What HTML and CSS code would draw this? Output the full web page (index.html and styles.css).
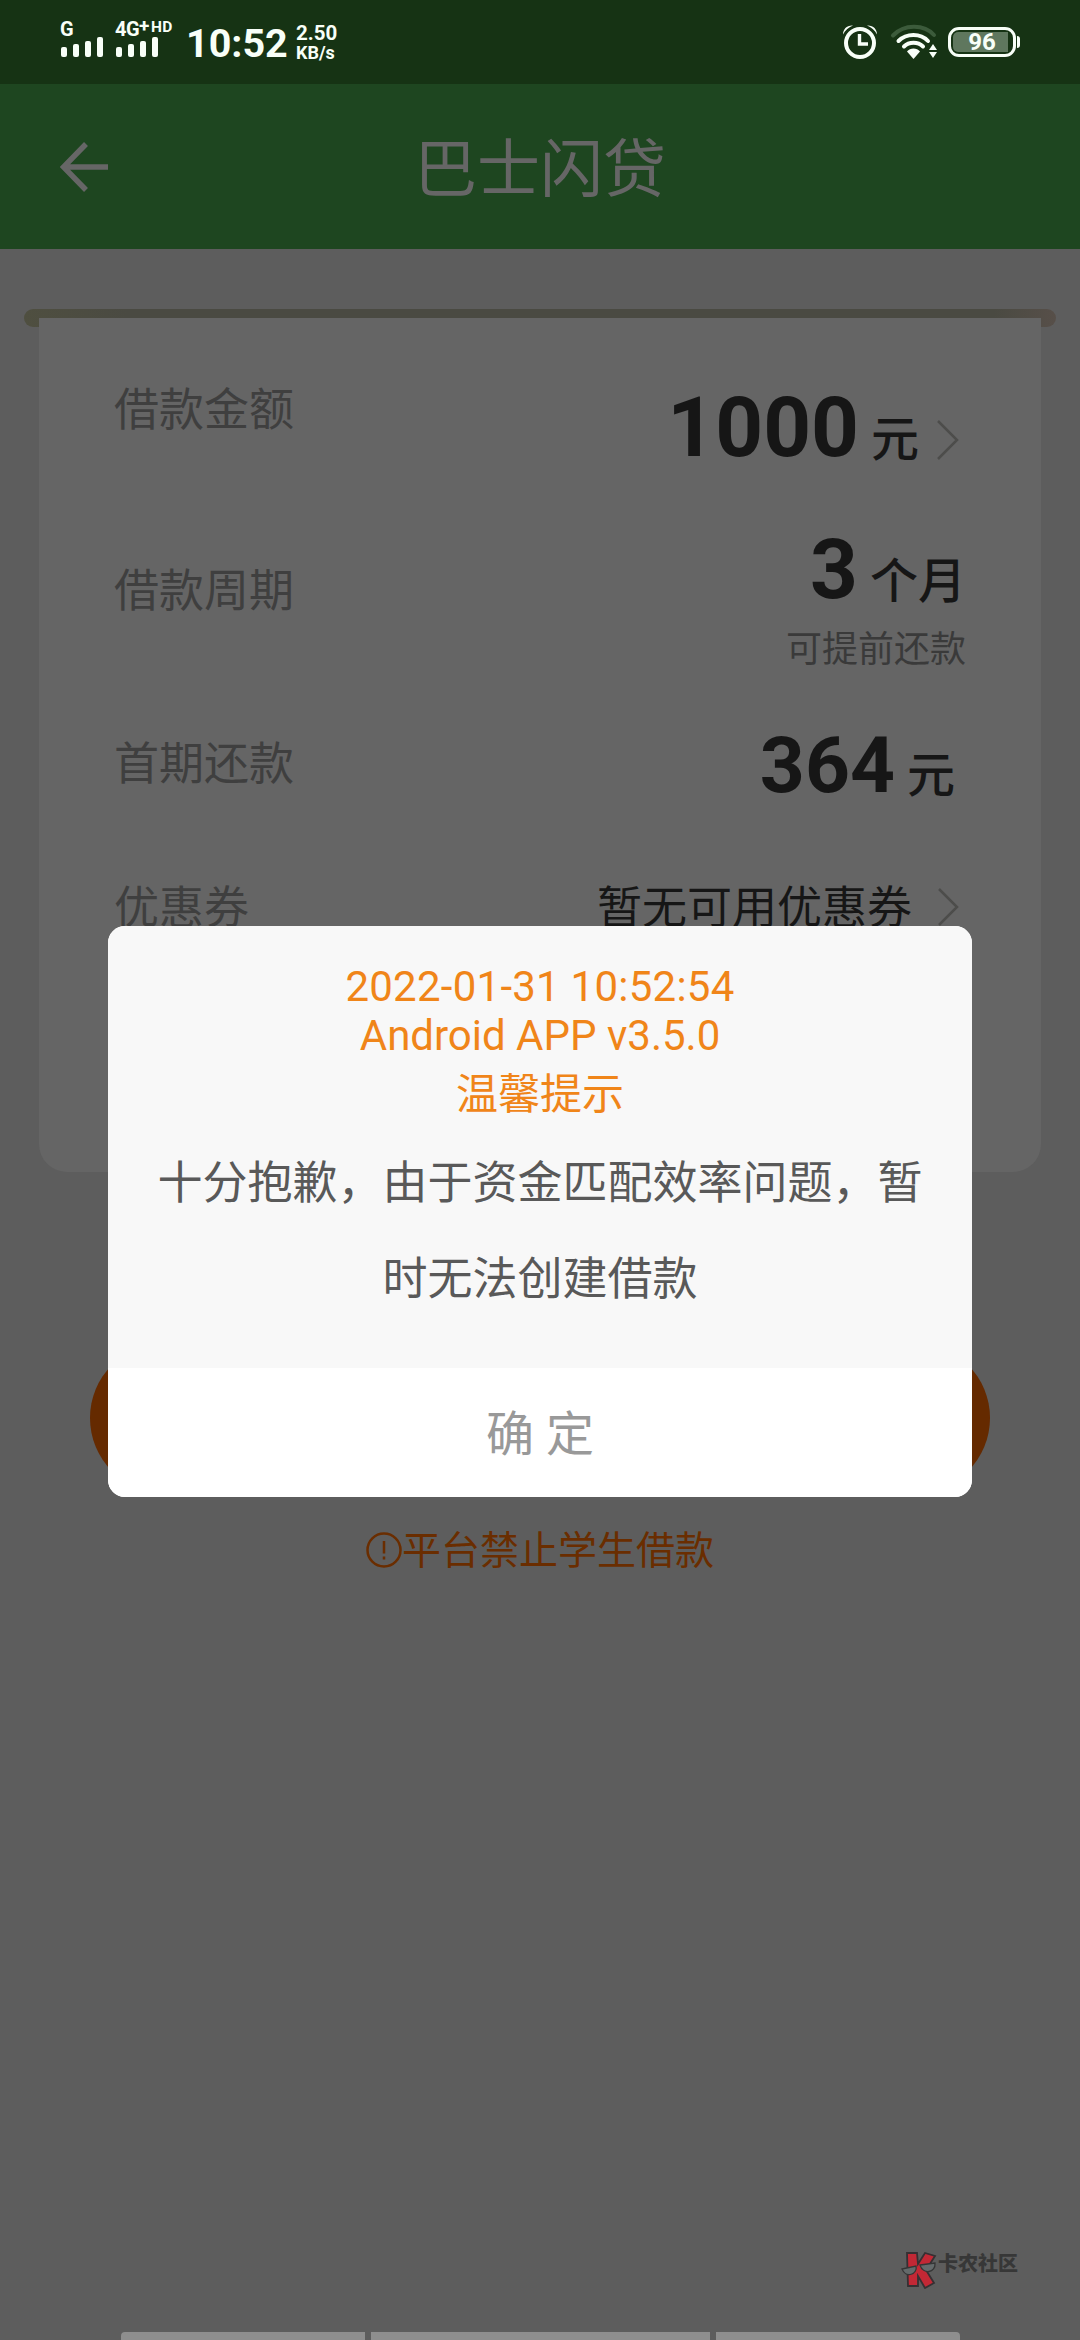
FILE: index.html
```html
<!DOCTYPE html>
<html lang="zh-CN">
<head>
<meta charset="utf-8">
<title>巴士闪贷</title>
<link rel="stylesheet" href="styles.css">
</head>
<body>
<div class="screen">
  <header class="status">
    <div class="sim">
      <span class="net">G</span>
      <svg class="bars" width="42" height="20" viewBox="0 0 42 20"><rect x="0" y="10" width="6" height="10" rx="2"/><rect x="12" y="7" width="6" height="13" rx="2"/><rect x="24" y="4" width="6" height="16" rx="2"/><rect x="36" y="0" width="6" height="20" rx="2"/></svg>
    </div>
    <div class="sim sim-second">
      <span class="net">4G<sup class="plus">+</sup><sup class="hd">HD</sup></span>
      <svg class="bars" width="42" height="20" viewBox="0 0 42 20"><rect x="0" y="10" width="6" height="10" rx="2"/><rect x="12" y="7" width="6" height="13" rx="2"/><rect x="24" y="4" width="6" height="16" rx="2"/><rect x="36" y="0" width="6" height="20" rx="2"/></svg>
    </div>
    <time class="clock">10:52</time>
    <div class="speed"><span>2.50</span><span class="unit">KB/s</span></div>
    <div class="indicators">
      <svg width="36" height="36" viewBox="0 0 36 36" fill="none" stroke="#f8fff8" stroke-width="4"><circle cx="18" cy="19" r="14"/><path d="M17.500 10v10h8.500" stroke-width="3.400"/><path d="M1 10.500C1 5 5 1 11 1.500 7 3 3 6.500 1 10.500zM35 10.500C35 5 31 1 25 1.500c4 1.500 8 5 10 9z" fill="#f8fff8" stroke="none"/></svg>
      <svg class="wifi" width="48" height="36" viewBox="0 0 48 36" fill="none" stroke="#f8fff8" stroke-width="4" stroke-linecap="round"><path d="M3 11.500C14 0 34 0 44 11" stroke="#3c5b3b"/><path d="M8.500 17c8-8 22-8 29.500 0M14 22.500c5-5 14-5 19 0"/><path d="M17 27.500c3-4 10-4 13 0l-6.500 7.500z" fill="#f8fff8" stroke="none"/><path d="M43 20l4 6h-8zM43 34l4-6h-8z" fill="#f8fff8" stroke="none"/></svg>
      <div class="battery"><div class="level">96</div></div><i class="cap"></i>
    </div>
  </header>

  <nav class="appbar">
    <svg width="48" height="50" viewBox="0 0 48 50" fill="none" stroke="#666" stroke-width="5.500"><path d="M26 2L3.500 25 26 48M4 25h44"/></svg>
    <h1 class="title">巴士闪贷</h1>
  </nav>

  <main class="page">
    <div class="slot">
      <section class="card">
        <div class="row amount"><span class="label">借款金额</span><div class="value"><b class="num">1000</b><span class="yuan">元</span><svg class="chev" width="24" height="42" viewBox="0 0 24 42"><path d="M2 2l19 19L2 40"/></svg></div></div>
        <div class="row period"><span class="label">借款周期</span><div class="stack"><div class="value"><b class="num">3</b><span class="yuan">个月</span></div><span class="hint">可提前还款</span></div></div>
        <div class="row first"><span class="label">首期还款</span><div class="value"><b class="num small">364</b><span class="yuan">元</span></div></div>
        <div class="row coupon"><span class="label">优惠券</span><div class="pick"><span>暂无可用优惠券</span><svg class="chev" width="24" height="42" viewBox="0 0 24 42"><path d="M3 3l18 18L3 39"/></svg></div></div>
      </section>
    </div>
    <div class="submit"></div>
    <p class="notice"><svg width="36" height="38" viewBox="0 0 36 38" fill="none" stroke="#6a2d00" stroke-width="2.500"><circle cx="18" cy="18" r="16.500"/><path d="M18 9v12.500M18 24.500v3"/></svg><span>平台禁止学生借款</span></p>
  </main>

  <footer class="bottom">
    <div class="mark">
      <svg width="36" height="38" viewBox="0 0 36 38"><path d="M6 2h10l1 11 7-11 10 3-9 14 8 13-9 5-7-12v10H7z" fill="#c22835" stroke="#363033" stroke-width="1.800"/><path d="M1 18l14-3c2 8-10 13-14 3zM19 14l15-2c1 10-12 12-15 2z" fill="#646a6b" stroke="#353535" stroke-width="1.300"/></svg>
      <span class="mark-text">卡农社区</span>
    </div>
    <div class="tabs"><i></i><i class="mid"></i><i></i></div>
  </footer>

  <div class="dialog" role="dialog">
    <div class="content">
      <h2 class="heading"><span class="date">2022-01-31 10:52:54</span><br>Android APP v3.5.0<br><span class="tip">温馨提示</span></h2>
      <p class="message">十分抱歉，由于资金匹配效率问题，暂时无法创建借款</p>
    </div>
    <button class="confirm">确 定</button>
  </div>
</div>
</body>
</html>
```
FILE: styles.css
```css
* { box-sizing: border-box; }
body { margin: 0; font-family: Roboto, "Noto Sans CJK SC", sans-serif; }
h1, h2, p { margin: 0; font-weight: 400; }
svg { display: block; flex: none; }

.screen { position: relative; width: 1080px; height: 2340px; display: flex; flex-direction: column; background: #5d5d5d; overflow: hidden; }

.status { height: 84px; display: flex; align-items: flex-start; padding: 0 60px; background: #163314; color: #f8fff8; font-weight: 700; }
.sim { width: 56px; padding-top: 20px; padding-left: 1px; }
.sim-second { width: 70px; padding-left: 0; }
.net { display: flex; height: 17px; font-size: 20px; line-height: 19px; letter-spacing: -0.500px; white-space: nowrap; margin-left: -1px; }
.plus { font-size: 19px; line-height: 12px; }
.hd { font-size: 15.500px; line-height: 14px; letter-spacing: 0.300px; margin-left: 2px; }
.bars { fill: #f8fff8; }
.clock { font-size: 39.500px; line-height: 46px; padding-top: 21px; width: 110px; }
.speed { display: flex; flex-direction: column; padding-top: 22px; font-size: 20.500px; line-height: 22px; }
.speed .unit { font-size: 18px; line-height: 17px; }
.indicators { margin-left: auto; display: flex; align-items: center; padding-top: 24px; }
.wifi { margin-left: 12px; }
.battery { width: 68px; height: 30px; margin-left: 10px; padding: 2px 5px 2px 2px; border: 3px solid #f8fff8; border-radius: 11px; }
.level { height: 20px; background: #5f775e; border-radius: 5px 0 0 5px; font-size: 24px; line-height: 21px; text-align: center; padding-left: 3px; }
.cap { width: 3px; height: 12px; margin-left: 1px; border-radius: 0 3px 3px 0; background: #f8fff8; }

.appbar { height: 165px; display: flex; align-items: center; padding: 0 60px; background: #1e4620; color: #666; }
.title { flex: 1; margin-right: 48px; padding-top: 7px; text-align: center; font-size: 63px; line-height: 80px; }

.page { flex: 1; padding-top: 60px; display: flex; flex-direction: column; align-items: center; }
.slot { flex: none; width: 1032px; height: 18px; padding: 9px 15px 0; border-radius: 9px; background: linear-gradient(90deg, #4f4f40, #4a4a42 10%, #4a4a42 94%, #574f49); }
.card { width: 1002px; height: 854px; padding: 0 75px 0 75px; background: #656565; border-radius: 0 0 28px 28px; }
.row { display: flex; justify-content: space-between; }
.label { font-size: 45px; line-height: 60px; color: #3f3f3f; }
.value { display: flex; align-items: baseline; justify-content: flex-end; color: #161616; line-height: 96px; }
.num { font-size: 83.500px; }
.num.small { font-size: 78.500px; }
.yuan { font-size: 48px; font-weight: 500; margin-left: 12px; }
.chev { fill: none; stroke: #4d4d4b; stroke-width: 2.500; }
.amount { height: 142px; padding-top: 62px; }
.amount .label { height: 60px; padding-top: 1px; }
.amount .value { margin-right: 6px; }
.amount .chev { margin-left: 17px; align-self: flex-start; margin-top: 39px; }
.period { height: 275px; padding-top: 62px; }
.period .label { padding-top: 40px; }
.period .stack { display: flex; flex-direction: column; align-items: flex-end; }
.hint { font-size: 36px; line-height: 44px; margin-top: -2px; color: #3a3a3a; }
.first { height: 144px; }
.first .value { height: 96px; margin: -18px 11px 0 0; }
.coupon { padding-right: 6px; }
.pick { display: flex; font-size: 45px; line-height: 60px; color: #161616; }
.pick .chev { margin: 7px 0 0 24px; }

.submit { flex: none; width: 900px; height: 150px; margin-top: 1016px; border-radius: 75px; background: #652a00; }
.notice { display: flex; align-items: center; justify-content: center; margin-top: 30px; font-size: 39px; line-height: 56px; color: #6a2d00; }

.bottom { flex: none; height: 96px; display: flex; flex-direction: column; align-items: center; justify-content: space-between; padding-top: 7px; }
.mark { align-self: flex-end; margin-right: 62px; display: flex; }
.mark-text { font: 900 20px/24px "Noto Sans CJK SC", sans-serif; color: #373737; margin-left: 1px; }
.tabs { display: flex; gap: 6px; height: 8px; }
.tabs i { width: 244px; background: #8e8e8e; }
.tabs i:first-child { border-radius: 4px 0 0 0; }
.tabs i:last-child { border-radius: 0 4px 0 0; }
.tabs .mid { width: 339px; }

.dialog { position: absolute; left: 108px; top: 926px; width: 864px; height: 571px; display: flex; flex-direction: column; border-radius: 17px; overflow: hidden; background: #fff; }
.content { height: 442px; padding: 36px 45px 0; background: #f8f8f8; text-align: center; }
.heading { font-size: 42px; line-height: 49px; color: #f08519; }
.date { letter-spacing: 0.250px; }
.tip { display: block; line-height: 70px; }
.message { font-size: 45px; line-height: 96px; margin-top: 6px; color: #595959; }
.confirm { flex: 1; border: 0; padding: 0 0 5px; background: #fff; color: #999; font: inherit; font-size: 48px; }
```
